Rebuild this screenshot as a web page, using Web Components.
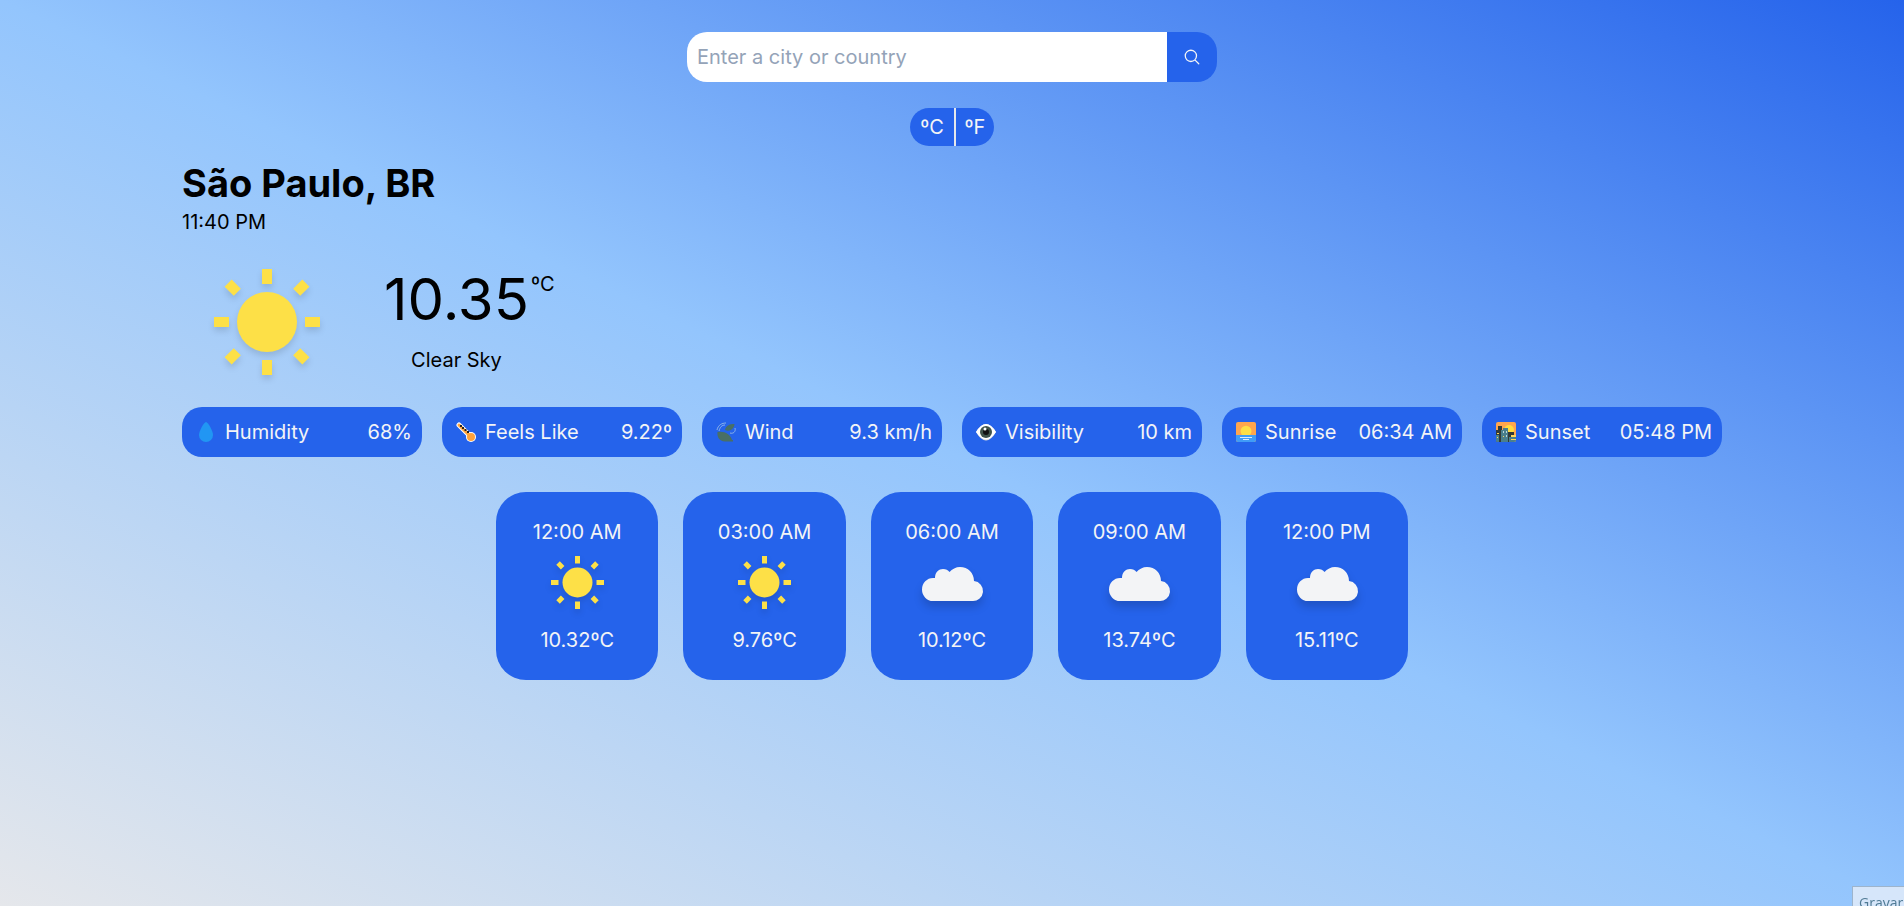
<!DOCTYPE html>
<html lang="en">
<head>
<meta charset="utf-8">
<meta name="viewport" content="width=device-width, initial-scale=1">
<title>Weather</title>
<style>
html { height: 100%; }
body {
  margin: 0;
  min-height: 100%;
  font: 20px/30px Inter, "Noto Sans", sans-serif;
  color: #000;
  background: linear-gradient(to top right, #e5e7eb, #93c5fd, #2563eb);
}
</style>
</head>
<body>
<weather-app></weather-app>
<script>
function define(name, html) {
  const template = document.createElement('template');
  template.innerHTML = html;
  customElements.define(name, class extends HTMLElement {
    constructor() {
      super();
      this.attachShadow({ mode: 'open' }).append(template.content.cloneNode(true));
    }
  });
}

define('search-bar', `
<style>
:host { display: block; width: 100%; max-width: 530px; }
form { display: flex; height: 50px; margin: 0; border-radius: 20px; overflow: hidden; }
input { flex: 1; min-width: 0; border: 0; outline: 0; padding: 0 10px; font: inherit; background: #fff; color: #000; }
input::placeholder { color: #94a3b8; opacity: 1; }
button { width: 50px; border: 0; padding: 0; display: grid; place-items: center; background: #2563eb; color: #f3f4f6; cursor: pointer; }
svg { display: block; width: 18px; height: 18px; }
</style>
<form onsubmit="return false">
  <input type="text" placeholder="Enter a city or country" aria-label="Enter a city or country">
  <button type="submit" aria-label="Search"><svg viewBox="0 0 24 24" fill="none" stroke="currentColor" stroke-width="1.7" stroke-linecap="round" stroke-linejoin="round"><path d="m21 21-5.197-5.197m0 0A7.5 7.5 0 1 0 5.196 5.196a7.5 7.5 0 0 0 10.607 10.607Z"/></svg></button>
</form>`);

define('unit-toggle', `
<style>
:host { display: flex; height: 38px; border-radius: 20px; overflow: hidden; background: #2563eb; }
button { box-sizing: border-box; border: 0; background: none; margin: 0; padding: 0; font: inherit; color: #f3f4f6; cursor: pointer; width: 44px; }
button + button { border-left: 2px solid #e5e7eb; width: 40px; }
</style>
<button type="button">ºC</button><button type="button">ºF</button>`);

define('icon-sun', `
<style>
:host { display: block; width: 106px; height: 106px; }
svg { display: block; width: 100%; height: 100%; overflow: visible; filter: drop-shadow(0 4px 3px rgb(0 0 0 / .12)); }
</style>
<svg viewBox="-53 -53 106 106" fill="#fde047" aria-hidden="true"><circle r="30"/><path d="M-5-53h10v15h-10zM-5 38h10v15h-10zM-53-5v10h15v-10zM38-5v10h15v-10z"/><path transform="rotate(45)" d="M-5-55h10v13h-10zM-5 42h10v13h-10zM-55-5v10h13v-10zM42-5v10h13v-10z"/></svg>`);

define('icon-cloud', `
<style>
:host { display: block; width: 60px; height: 38px; }
svg { display: block; width: 100%; height: 100%; overflow: visible; filter: drop-shadow(0 6px 4px rgb(0 0 0 / .16)); }
</style>
<svg viewBox="0 -4 60 38" fill="#f3f4f6" aria-hidden="true"><path d="M11 34A11 11.500 0 0 1 11 11H13C13 5 17 2 21 2 24 2 26 3 27.500 5 30 2 34 0 38 0 46 0 52 6 52 14A10 10 0 0 1 50 34Z"/></svg>`);

define('current-weather', `
<style>
:host { display: block; }
h1 { margin: 0; font-size: 38px; line-height: 40px; font-weight: 700; }
p { margin: 0; }
.time { line-height: 30px; margin-top: 4px; }
.now { display: flex; align-items: center; gap: 64px; height: 170px; padding-left: 32px; }
.reading { display: grid; grid-template-columns: auto auto; column-gap: 2px; row-gap: 16px; justify-items: center; }
.value { font-size: 58px; line-height: 60px; }
.unit { line-height: 30px; }
</style>
<h1>São Paulo, BR</h1>
<p class="time">11:40 PM</p>
<div class="now">
  <icon-sun></icon-sun>
  <div class="reading">
    <span class="value">10.35</span><span class="unit">ºC</span>
    <p>Clear Sky</p>
  </div>
</div>`);

define('weather-stat', `
<style>
:host { display: flex; align-items: center; box-sizing: border-box; height: 50px; padding: 0 10px 0 14px; border-radius: 20px; background: #2563eb; color: #f3f4f6; white-space: nowrap; }
::slotted(svg) { display: block; width: 20px; height: 20px; margin-right: 9px; flex: none; }
.label { flex: 1; }
</style>
<slot name="icon"></slot><span class="label"><slot></slot></span><slot name="value"></slot>`);

define('forecast-card', `
<style>
:host { display: flex; flex-direction: column; align-items: center; justify-content: space-between; box-sizing: border-box; height: 188px; padding: 25px 10px; border-radius: 30px; background: #2563eb; color: #f3f4f6; }
.icon { display: grid; place-items: center; height: 60px; margin-bottom: 8px; }
::slotted(icon-sun) { width: 53px; height: 53px; }
</style>
<slot name="time"></slot><div class="icon"><slot></slot></div><slot name="temp"></slot>`);

define('screen-tip', `
<style>
:host { position: fixed; right: 0; bottom: 0; box-sizing: border-box; width: 52px; height: 20px; padding: 6px 0 0 6px; border: 1px solid #9db4cc; border-width: 1px 0 0 1px; background: #d6e6fa; color: #4f7a94; font: 14px/20px "Open Sans", sans-serif; }
</style>
<slot></slot>`);

define('weather-app', `
<style>
:host { display: block; padding: 32px 20px 40px; }
.top { display: flex; flex-direction: column; align-items: center; gap: 26px; }
main { max-width: 1540px; margin: 17px auto 0; }
.stats { display: grid; grid-template-columns: repeat(auto-fit, minmax(240px, 1fr)); gap: 20px; }
.forecast { display: grid; grid-template-columns: repeat(auto-fit, minmax(140px, 1fr)); gap: 25px; max-width: 912px; margin: 35px auto 0; }
</style>
<div class="top"><search-bar></search-bar><unit-toggle></unit-toggle></div>
<main>
<current-weather></current-weather>
<section class="stats" aria-label="Conditions">
<weather-stat><svg slot="icon" viewBox="0 0 20 20"><path fill="#2196f3" d="M10 0C12 0 17 9 17 13a7 7 0 0 1-14 0C3 9 8 0 10 0Z"/></svg>Humidity<span slot="value">68%</span></weather-stat>
<weather-stat><svg slot="icon" viewBox="0 0 20 20"><path stroke="#fff" stroke-width="5" stroke-linecap="round" d="M3 3l10 10"/><circle cx="15" cy="15" r="5" fill="#fff"/><path stroke="#ffa33c" stroke-width="3" stroke-linecap="round" d="M3 3l11 11"/><circle cx="15" cy="15" r="4" fill="#ffa33c"/><path d="M4 3h2v2h-2zM6 5h2v2h-2zM8.500 7h2v2h-2zM11 9h2v2h-2z" fill="#222"/></svg>Feels Like<span slot="value">9.22º</span></weather-stat>
<weather-stat><svg slot="icon" viewBox="0 0 20 20"><path fill="#496f66" d="M9 8C10 3 14 2 18.500 2 18 7 14 10 9 8ZM1.500 10C9 9 14 12 16 18H17V19.500H9C3 19 1 15 1.500 10Z"/><path fill="none" stroke="#8bb2e8" d="M1 8C2 3 6 1 10 1M3 9C4 5 6 3 9 3M19 6C20 10 17 12 14 11"/></svg>Wind<span slot="value">9.3 km/h</span></weather-stat>
<weather-stat><svg slot="icon" viewBox="0 0 20 20"><path fill="#ddd" d="M0 10Q10-6 20 10 10 27 0 10Z"/><path fill="#fff" d="M0 10Q10-6 20 10 10 25 0 10Z"/><circle cx="10" cy="10" r="6" fill="#40534a"/><circle cx="10" cy="10" r="3" fill="#111"/><circle cx="9" cy="7" r="1.500" fill="#fff"/></svg>Visibility<span slot="value">10 km</span></weather-stat>
<weather-stat><svg slot="icon" viewBox="0 0 20 20"><rect width="20" height="20" rx="2" fill="#ffa64d"/><path d="M0 13h20v5a2 2 0 0 1-2 2H2a2 2 0 0 1-2-2Z" fill="#409cf7"/><path d="M6 13a5.500 5.500 0 1 1 8 0Z" fill="#ffdf46"/><path stroke="#d8eaff" d="M4 15.500h12M7 17.500h6"/></svg>Sunrise<span slot="value">06:34 AM</span></weather-stat>
<weather-stat><svg slot="icon" viewBox="0 0 20 20"><rect width="20" height="20" rx="2" fill="#ffa64d"/><circle cx="13" cy="8" r="5" fill="#ffdc3e"/><path fill="#333a38" d="M0 8h2V4h4v4h2v12H2a2 2 0 0 1-2-2ZM12 10h6v10h-6z"/><path fill="#4a7f8c" d="M5 8h2V6h5v14H5zM0 13h3v7H1l-1-1zM13 15h7v3a2 2 0 0 1-2 2h-5z"/><path fill="#ffd65a" d="M15 13h5v2h-5zM15 17h5v1h-5zM1 15h1v1H1zM7 14h1v1H7zM1 11h2v1H1z"/><path fill="#b9d4dc" d="M7 9h1v2H7zM10 9h1v2h-1zM10 13h1v2h-1z"/></svg>Sunset<span slot="value">05:48 PM</span></weather-stat>
</section>
<section class="forecast" aria-label="Forecast">
<forecast-card><span slot="time">12:00 AM</span><icon-sun></icon-sun><span slot="temp">10.32ºC</span></forecast-card>
<forecast-card><span slot="time">03:00 AM</span><icon-sun></icon-sun><span slot="temp">9.76ºC</span></forecast-card>
<forecast-card><span slot="time">06:00 AM</span><icon-cloud></icon-cloud><span slot="temp">10.12ºC</span></forecast-card>
<forecast-card><span slot="time">09:00 AM</span><icon-cloud></icon-cloud><span slot="temp">13.74ºC</span></forecast-card>
<forecast-card><span slot="time">12:00 PM</span><icon-cloud></icon-cloud><span slot="temp">15.11ºC</span></forecast-card>
</section>
</main>
<screen-tip>Gravar</screen-tip>`);
</script>
</body>
</html>
